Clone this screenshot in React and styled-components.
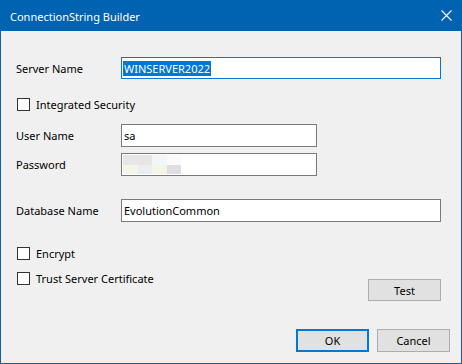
import React from 'react'
import styled, { createGlobalStyle } from 'styled-components'

const GlobalStyle = createGlobalStyle`
    html, body {
        margin: 0;
        padding: 0;
        background: #ffffff;
    }

    body {
        font-family: "Noto Sans", "DejaVu Sans", sans-serif;
        font-size: 11px;
        color: #000000;
    }
`

// Redacted password, drawn as the blurred blocks of the screenshot
const passwordPixels = [
    '#e6e6e6', '#e8e6e5', '#eff7f8', '#fafafa',
    '#f3f5e8', '#e9eef1', '#f5f5e6', '#e0dde2'
]

const CloseIcon = () => (
    <svg width="11" height="11" viewBox="0 0 11 11">
        <path d="M0.5 0.5 L10.5 10.5 M10.5 0.5 L0.5 10.5" stroke="#ffffff" strokeWidth="1.1" />
    </svg>
)

const Checkbox = ({ label, mt }) => (
    <CheckRow $mt={mt}>
        <Box />
        <CheckLabel>{label}</CheckLabel>
    </CheckRow>
)

const Field = ({ label, mt, width, children }) => (
    <FieldRow $mt={mt}>
        <Label>{label}</Label>
        <TextBox $width={width}>{children}</TextBox>
    </FieldRow>
)

export default function App() {
    return (
        <>
            <GlobalStyle />
            <Window>
                <TitleBar>
                    <Title>ConnectionString Builder</Title>
                    <CloseButton><CloseIcon /></CloseButton>
                </TitleBar>

                <Body>
                    <FieldRow $mt={26}>
                        <Label>Server Name</Label>
                        <TextBox $width={320} $height={22} $focused>
                            <Selected>WINSERVER2022</Selected>
                        </TextBox>
                    </FieldRow>

                    <Checkbox label="Integrated Security" mt={19} />

                    <Field label="User Name" mt={13} width={196}>sa</Field>

                    <FieldRow $mt={6}>
                        <Label>Password</Label>
                        <TextBox $width={196}>
                            <Pixelated>
                                {passwordPixels.map((c, i) => (
                                    <Pixel key={i} style={{ background: c }} />
                                ))}
                            </Pixelated>
                        </TextBox>
                    </FieldRow>

                    <Field label="Database Name" mt={23} width={320}>EvolutionCommon</Field>

                    <Checkbox label="Encrypt" mt={25} />

                    <OptionsRow>
                        <Checkbox label="Trust Server Certificate" mt={12} />
                        <TestButton>Test</TestButton>
                    </OptionsRow>

                    <Footer>
                        <DialogButton $primary>OK</DialogButton>
                        <DialogButton>Cancel</DialogButton>
                    </Footer>
                </Body>
            </Window>
        </>
    )
}

const Window = styled.div`
    width: 462px;
    height: 364px;
    box-sizing: border-box;
    border: 1px solid #0063b1;
    display: flex;
    flex-direction: column;
    background: #f0f0f0;
`

const TitleBar = styled.div`
    height: 30px;
    flex-shrink: 0;
    background: #0063b1;
    display: flex;
    align-items: center;
    justify-content: space-between;
    padding: 0 9px 0 9px;
`

const Title = styled.span`
    color: #ffffff;
    font-size: 11px;
    line-height: 16px;
    padding-top: 1px;
`

const CloseButton = styled.div`
    display: flex;
    align-items: center;
    padding-bottom: 1px;
`

const Body = styled.div`
    flex: 1;
    display: flex;
    flex-direction: column;
    padding: 0 11px 0 15px;
    background: #f0f0f0;
`

const FieldRow = styled.div`
    display: flex;
    align-items: center;
    margin-top: ${props => props.$mt}px;
`

const Label = styled.span`
    width: 105px;
    flex-shrink: 0;
    line-height: 15px;
`

const TextBox = styled.div`
    width: ${props => props.$width}px;
    height: ${props => props.$height || 23}px;
    box-sizing: border-box;
    background: #ffffff;
    border: 1px solid ${props => (props.$focused ? '#0078d7' : '#7a7a7a')};
    display: flex;
    align-items: center;
    padding-left: 2px;
    line-height: 15px;
`

const Selected = styled.span`
    background: #0078d7;
    color: #ffffff;
    margin-left: -1px;
    padding: 0 1px;
`

const Pixelated = styled.div`
    display: grid;
    grid-template-columns: repeat(4, 14.5px);
    grid-template-rows: repeat(2, 9.5px);
    margin-left: -1px;
`

const Pixel = styled.div``

const CheckRow = styled.div`
    display: flex;
    align-items: center;
    margin-top: ${props => props.$mt}px;
    padding-left: 1px;
    height: 13px;
`

const Box = styled.div`
    width: 13px;
    height: 13px;
    box-sizing: border-box;
    border: 1px solid #333333;
    background: #ffffff;
    margin-right: 6px;
`

const CheckLabel = styled.span`
    line-height: 15px;
`

const OptionsRow = styled.div`
    display: flex;
    align-items: flex-start;
    justify-content: space-between;
    padding-right: 9px;
`

const Button = styled.button`
    font-family: inherit;
    font-size: 11px;
    color: #000000;
    background: #e1e1e1;
    border: 1px solid #adadad;
    box-sizing: border-box;
    padding: 0;
    margin: 0;
`

const TestButton = styled(Button)`
    width: 73px;
    height: 22px;
    margin-top: 19px;
`

const Footer = styled.div`
    display: flex;
    justify-content: flex-end;
    gap: 8px;
    margin-top: 28px;
`

const DialogButton = styled(Button)`
    width: 73px;
    height: 23px;
    border: ${props => (props.$primary ? '2px solid #0078d7' : '1px solid #adadad')};
`
